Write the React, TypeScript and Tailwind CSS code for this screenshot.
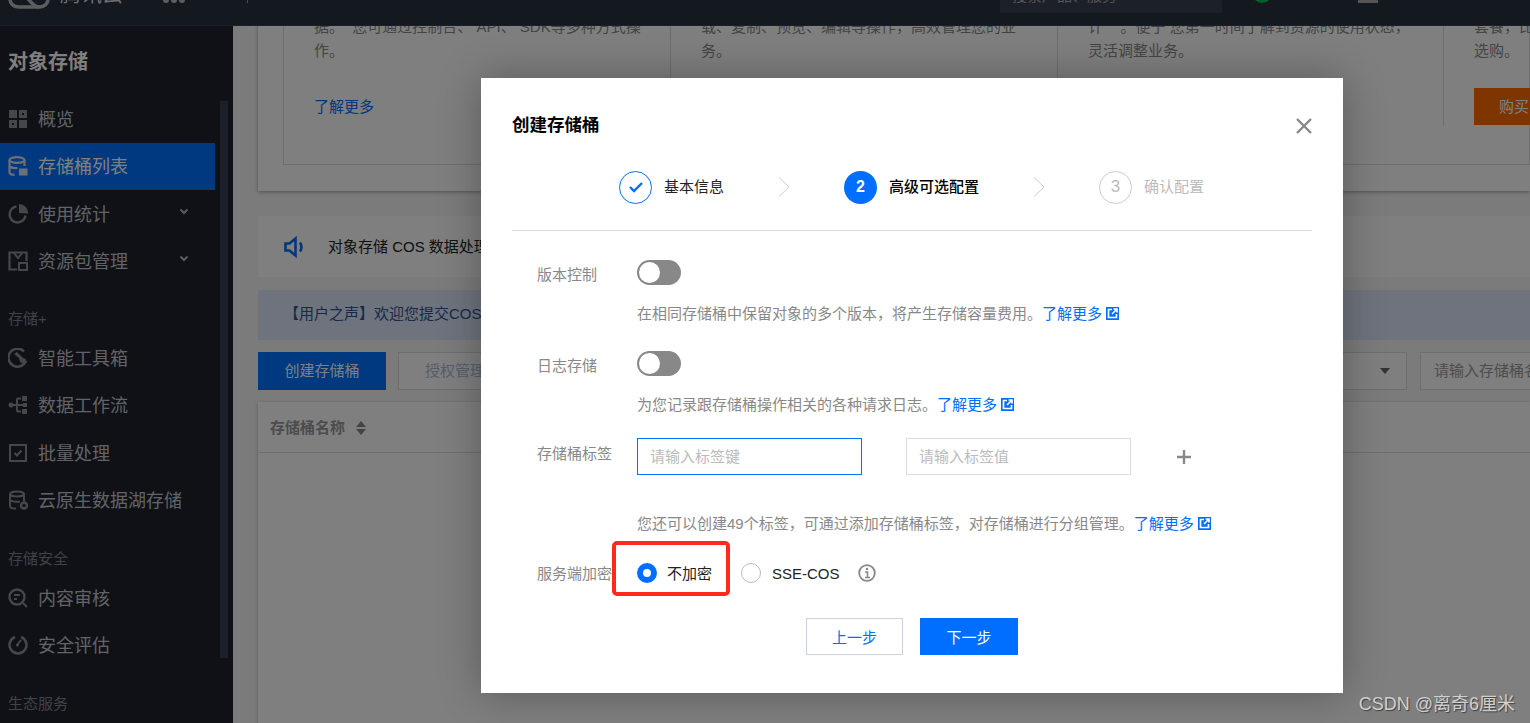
import React from 'react';

const FONT = 'font-["Liberation_Sans","Noto_Sans_CJK_SC",sans-serif]';

const Ic: React.FC<{ children: React.ReactNode }> = ({ children }) => (
  <svg width="20" height="20" viewBox="0 0 20 20" fill="none" stroke="currentColor" strokeWidth="2" className="shrink-0">
    {children}
  </svg>
);

const icons = {
  grid: (
    <Ic>
      <rect x="1" y="1" width="8" height="8" fill="currentColor" stroke="none" />
      <path fillRule="evenodd" d="M11 1h8v8h-8zM14 4v2h2V4z" fill="currentColor" stroke="none" />
      <path fillRule="evenodd" d="M1 11h8v8H1zM4 14v2h2v-2z" fill="currentColor" stroke="none" />
      <rect x="11" y="11" width="8" height="8" fill="currentColor" stroke="none" />
    </Ic>
  ),
  bucket: (
    <Ic>
      <ellipse cx="9" cy="4" rx="7.5" ry="2.8" strokeWidth="2.200" />
      <path d="M1.500 4v12c0 1.500 1.500 2.800 5 2.800M16.500 4v6M1.500 10.500c2 1.500 6 1.800 8 1.500" strokeWidth="2.200" />
      <rect x="11" y="12.500" width="8.500" height="7" fill="currentColor" stroke="none" />
    </Ic>
  ),
  pie: (
    <Ic>
      <path d="M8.500 2.500a8 8 0 1 0 9 9" strokeWidth="2.500" />
      <path d="M11 0a9 9 0 0 1 9 9.500l-9-.500z" fill="currentColor" stroke="none" />
    </Ic>
  ),
  box: (
    <Ic>
      <path d="M9 18.500H1.500v-17h17V10" strokeWidth="2.200" />
      <path d="M6 2l4 5 4-5" />
      <rect x="11" y="12" width="8" height="7" />
    </Ic>
  ),
  tool: (
    <Ic>
      <path d="M16 3.500a9 9 0 1 0 2 9" strokeWidth="2.500" />
      <path d="M6 6l3-2 6 6 3 1-2 5-4-2-1-4z" fill="currentColor" stroke="none" />
    </Ic>
  ),
  flow: (
    <Ic>
      <circle cx="3" cy="10" r="2.500" fill="currentColor" stroke="none" />
      <path d="M3 10h14M9 3.500v13M9 3.500h4M9 16.500h4" />
      <rect x="14" y="1" width="5" height="5" fill="currentColor" stroke="none" />
      <rect x="15" y="8" width="4" height="4" fill="currentColor" stroke="none" />
      <rect x="14" y="14" width="5" height="5" fill="currentColor" stroke="none" />
    </Ic>
  ),
  check: (
    <Ic>
      <rect x="2" y="2" width="16" height="16" />
      <path d="M6.500 10l2.500 2.500 4.500-5" />
    </Ic>
  ),
  db: (
    <Ic>
      <ellipse cx="9" cy="4" rx="7" ry="2.500" />
      <path d="M2 4v12c0 1.500 2 2.500 6 2.500M16 4v7M2 10c2 1.500 6 2 10 1.500" />
      <circle cx="16" cy="15.500" r="3" strokeWidth="2.500" />
    </Ic>
  ),
  audit: (
    <Ic>
      <circle cx="9" cy="9" r="7.500" strokeWidth="2.400" />
      <path d="M15 15l4 4M6 7h6M6 11h3" />
    </Ic>
  ),
  gauge: (
    <Ic>
      <path d="M7 2a8.500 8.500 0 1 0 6 0" strokeWidth="2.500" />
      <path d="M9 10l4-5" />
      <circle cx="9.500" cy="10" r="1.500" fill="currentColor" stroke="none" />
    </Ic>
  ),
};

const NavItem: React.FC<{ icon: React.ReactNode; label: string; active?: boolean; arrow?: boolean }> = ({ icon, label, active, arrow }) => (
  <div className={`h-[47.5px] w-[215px] flex items-center gap-[10px] pl-2 text-[18px] ${active ? 'bg-[#0072ff] text-white' : 'text-[#c2c6cc]'}`}>
    <span className={active ? 'text-[#dde]' : 'text-[#8a8e96]'}>{icon}</span>
    <span className="flex-1 whitespace-nowrap pt-[3px]">{label}</span>
    {arrow && (
      <svg width="10" height="8" viewBox="0 0 10 8" fill="none" stroke="#b4b8be" strokeWidth="2" className="mr-[26px] -mt-1">
        <path d="M1.500 1.500L5 5l3.500-3.500" />
      </svg>
    )}
  </div>
);

const GroupLabel: React.FC<{ text: string; h: string }> = ({ text, h }) => (
  <div className={`${h} pl-2 text-[15px] leading-5 text-[#7f858f]`}>{text}</div>
);

const Sidebar = () => (
  <aside className="relative w-[233px] shrink-0 bg-[#1e222e] overflow-hidden">
    <div className="h-[69px] pl-2 pt-[21px] text-[20px] leading-[30px] font-bold text-white">对象存储</div>
    <NavItem icon={icons.grid} label="概览" />
    <NavItem icon={icons.bucket} label="存储桶列表" active />
    <NavItem icon={icons.pie} label="使用统计" arrow />
    <NavItem icon={icons.box} label="资源包管理" arrow />
    <GroupLabel text="存储+" h="h-[49px] pt-[24px]" />
    <NavItem icon={icons.tool} label="智能工具箱" />
    <NavItem icon={icons.flow} label="数据工作流" />
    <NavItem icon={icons.check} label="批量处理" />
    <NavItem icon={icons.db} label="云原生数据湖存储" />
    <GroupLabel text="存储安全" h="h-[50px] pt-[25px]" />
    <NavItem icon={icons.audit} label="内容审核" />
    <NavItem icon={icons.gauge} label="安全评估" />
    <GroupLabel text="生态服务" h="h-[50px] pt-[25px]" />
    {/* scrollbar */}
    <div className="absolute left-[220px] top-[75px] w-2 h-[557px] bg-[#343f55]" />
  </aside>
);

const introCols = [
  { w: 'w-[387px]', lines: ['据。  您可通过控制台、 API、 SDK等多种方式操', '作。'], link: true },
  { w: 'w-[387px]', lines: ['载、复制、预览、编辑等操作，高效管理您的业', '务。'] },
  { w: 'w-[386px]', lines: ['计”\u00a0\u00a0\u00a0。便于 您第一时间了解到资源的使用状态，', '灵活调整业务。'] },
  { w: 'w-[120px]', lines: ['套餐，比', '选购。'], buy: true },
];

const Main = () => (
  <main className="flex-1 min-w-0 bg-[#f6f7f9] pl-[25px] overflow-hidden">
    {/* intro card */}
    <div className="-mt-[40px] h-[205px] bg-white shadow-[0_1px_4px_rgba(0,0,0,0.35)] pl-[25px]">
      <div className="h-[179px] flex border border-[#ddd]">
        {introCols.map((c, i) => (
          <div key={i} className={`${c.w} shrink-0 h-[139px] pl-[30px] pt-[28px] text-[15px] leading-6 text-[#888] whitespace-pre ${i < 3 ? 'border-r border-[#ddd]' : ''}`}>
            {c.lines.map(l => <div key={l}>{l}</div>)}
            {c.link && <div className="mt-[32px] text-[#006eff]">了解更多</div>}
            {c.buy && <div className="mt-[25px] w-[80px] h-[37px] pl-[25px] bg-[#ff6a00] text-white leading-[37px]">购买</div>}
          </div>
        ))}
      </div>
    </div>

    {/* notice */}
    <div className="mt-[25px] h-[61px] bg-white flex items-center pl-[26px] text-[15px] text-[#222]">
      <svg width="21" height="22" viewBox="0 0 21 22" fill="none" stroke="#006eff" strokeWidth="2.600" className="shrink-0">
        <path d="M1.500 7.500h4l6-5v17l-6-5h-4z" />
        <path d="M16 6.500c2 3 2 6 0 9" />
      </svg>
      <span className="ml-[23px] pt-[2px] whitespace-nowrap">对象存储 COS 数据处理功能升级</span>
    </div>

    {/* user voice */}
    <div className="mt-[13px] h-[50px] pb-[2px] bg-[#dde7fb] flex items-center pl-[26px] text-[15px] text-[#2f5590] whitespace-nowrap">
      【用户之声】欢迎您提交COS使用反馈
    </div>

    {/* toolbar */}
    <div className="mt-[12px] h-[38px] flex text-[15px] -mr-[30px]">
      <div className="w-[128px] flex items-center justify-center bg-[#0072ff] text-white">创建存储桶</div>
      <div className="ml-[12px] w-[120px] flex items-center pl-[26px] border border-[#ddd] bg-white text-[#a9bbd9]">授权管理</div>
      <div className="ml-auto w-[180px] relative border border-[#ddd] bg-white">
        <svg width="10" height="6" viewBox="0 0 10 6" className="absolute right-[16px] top-[15px]"><path d="M0 0h10L5 6z" fill="#666" /></svg>
      </div>
      <div className="ml-[13px] w-[140px] flex items-center pl-[13px] border border-[#ddd] bg-white text-[#999] whitespace-nowrap overflow-hidden">请输入存储桶名称</div>
    </div>

    {/* table */}
    <div className="mt-[12px] h-[400px] bg-white shadow-[0_1px_4px_rgba(0,0,0,0.25)]">
      <div className="h-[51px] pt-[2px] border-b border-[#ddd] flex items-center pl-3 text-[15px] font-bold text-[#999]">
        存储桶名称
        <svg width="10" height="14" viewBox="0 0 10 14" className="ml-[11px]"><path d="M5 0l5 6H0zM0 8h10l-5 6z" fill="#888" /></svg>
      </div>
    </div>
  </main>
);

const ExternalLink = () => (
  <svg width="13" height="13" viewBox="0 0 13 13" className="inline-block ml-1 align-[-1px]">
    <rect width="13" height="13" fill="#006eff" />
    <path d="M6 2.500H2.500v8h8V7M6 7l4.500-4.500M7.500 2h3.500v3.500" fill="none" stroke="#fff" strokeWidth="1.700" />
  </svg>
);

const Toggle = () => (
  <div className="w-[44px] h-[25px] rounded-full bg-[#888] p-[2px] shrink-0">
    <div className="w-[21px] h-[21px] rounded-full bg-white" />
  </div>
);

const Help: React.FC<{ text: string; mt: string }> = ({ text, mt }) => (
  <div className={`${mt} pl-[125px] text-[15px] leading-5 text-[#888] whitespace-nowrap`}>
    {text}<span className="text-[#006eff]">了解更多</span><ExternalLink />
  </div>
);

const Chevron = () => (
  <svg width="12" height="20" viewBox="0 0 12 20" fill="none" stroke="#ccc" className="shrink-0">
    <path d="M1 .5L11 10 1 19.500" />
  </svg>
);

const Label: React.FC<{ text: string; cls?: string }> = ({ text, cls }) => (
  <div className={`w-[100px] pl-[25px] shrink-0 text-[15px] text-[#888] whitespace-nowrap box-content -mr-[25px] ${cls ?? ''}`}>{text}</div>
);

const Modal = () => (
  <div className="absolute left-[481px] top-[78px] w-[862px] bg-white px-[31px] pb-[38px] shadow-[0_0_40px_rgba(0,0,0,0.3)]">
    {/* header */}
    <div className="h-[92px] flex items-center justify-between">
      <div className="pt-[2px] text-[17.5px] font-bold text-black">创建存储桶</div>
      <svg width="16" height="16" viewBox="0 0 16 16" fill="none" stroke="#888" strokeWidth="2.400" className="mt-1"><path d="M1 1l14 14M15 1L1 15" /></svg>
    </div>

    {/* steps */}
    <div className="h-[34px] flex items-center pl-[107px] text-[15px]">
      <div className="w-[33px] h-[33px] rounded-full border border-[#006eff] flex items-center justify-center shrink-0">
        <svg width="14" height="12" viewBox="0 0 14 12" fill="none" stroke="#006eff" strokeWidth="2.400"><path d="M1 6l4 4 8-8" /></svg>
      </div>
      <span className="ml-[12px] text-[#222]">基本信息</span>
      <div className="mx-[54px]"><Chevron /></div>
      <div className="w-[33px] h-[33px] rounded-full bg-[#006eff] text-[16px] text-white font-bold flex items-center justify-center shrink-0">2</div>
      <span className="ml-[12px] font-medium text-black">高级可选配置</span>
      <div className="mx-[54px]"><Chevron /></div>
      <div className="w-[33px] h-[33px] rounded-full border border-[#ccc] text-[17px] text-[#bbb] flex items-center justify-center shrink-0">3</div>
      <span className="ml-[12px] text-[#bbb]">确认配置</span>
    </div>

    <div className="mt-[26px] border-t border-[#ddd]" />

    {/* form */}
    <div className="mt-[29px] h-[25px] flex items-center">
      <Label text="版本控制" cls="mt-[6px]" />
      <div className="ml-[25px]"><Toggle /></div>
    </div>
    <Help text="在相同存储桶中保留对象的多个版本，将产生存储容量费用。" mt="mt-[19px]" />

    <div className="mt-[27px] h-[25px] flex items-center">
      <Label text="日志存储" cls="mt-[6px]" />
      <div className="ml-[25px]"><Toggle /></div>
    </div>
    <Help text="为您记录跟存储桶操作相关的各种请求日志。" mt="mt-[19px]" />

    <div className="mt-[23px] h-[37px] flex items-center">
      <Label text="存储桶标签" cls="-mt-[5px]" />
      <div className="ml-[25px] w-[225px] h-[37px] border border-[#0070ff] pl-[12px] pt-[2px] flex items-center text-[15px] text-[#bbb]">请输入标签键</div>
      <div className="ml-[44px] w-[225px] h-[37px] border border-[#ddd] pl-[12px] pt-[2px] flex items-center text-[15px] text-[#bbb]">请输入标签值</div>
      <svg width="14" height="14" viewBox="0 0 14 14" stroke="#888" strokeWidth="2.400" className="ml-[46px]"><path d="M7 0v14M0 7h14" /></svg>
    </div>
    <Help text="您还可以创建49个标签，可通过添加存储桶标签，对存储桶进行分组管理。" mt="mt-[39px]" />

    <div className="mt-[29px] h-[20px] flex items-center text-[15px] text-[#222]">
      <Label text="服务端加密" cls="pt-[2px]" />
      <div className="ml-[25px] w-[20px] h-[20px] rounded-full border-[6px] border-[#006eff] shrink-0" />
      <span className="ml-[10px] pt-[2px] whitespace-nowrap">不加密</span>
      <div className="ml-[29px] w-[20px] h-[20px] rounded-full border border-[#bbb] shrink-0" />
      <span className="ml-[11px] pt-[2px] whitespace-nowrap">SSE-COS</span>
      <svg width="18" height="18" viewBox="0 0 18 18" fill="none" stroke="#888" className="ml-[18px]">
        <circle cx="9" cy="9" r="7.800" strokeWidth="1.800" />
        <path d="M7 8h2.500v5M7 13.500h5" strokeWidth="1.600" />
        <circle cx="9" cy="5" r="1.200" fill="#888" stroke="none" />
      </svg>
    </div>

    {/* footer */}
    <div className="mt-[35px] flex justify-center gap-[17px] text-[15px]">
      <div className="w-[97px] h-[37px] pt-1 border border-[#c9d4e4] text-[#006eff] flex items-center justify-center">上一步</div>
      <div className="w-[98px] h-[37px] pt-1 bg-[#006eff] text-white flex items-center justify-center">下一步</div>
    </div>

    {/* annotation drawn on the screenshot */}
    <div className="absolute left-[131px] top-[463px] w-[118px] h-[55px] border-[4px] border-[#ff2a1a] rounded-[5px]" />
  </div>
);

export default function App() {
  return (
    <div className={`relative w-[1530px] h-[723px] overflow-hidden flex flex-col ${FONT}`}>
      {/* top bar, scrolled partly out of view */}
      <header className="relative z-10 h-[26px] shrink-0 bg-[#28303f] border-b border-[#363f50] overflow-hidden">
        <div className="-mt-[26px] h-[39px] flex items-center text-[#ddd]">
          <svg width="42" height="30" viewBox="0 0 42 30" fill="none" stroke="#bbb" strokeWidth="3.500" className="ml-2 shrink-0">
            <path d="M11 28C5 28 2 24 2 20s3-8 9-8c6 0 12 16 20 16 6 0 9-4 9-8s-3-8-9-8c-4 0-7 2-10 6" />
            <path d="M11 28h20" />
          </svg>
          <span className="ml-[10px] text-[21px] whitespace-nowrap">腾讯云</span>
          <span className="ml-[40px] w-[22px] border-b-[6px] border-dotted border-[#bbb] self-end mb-[10px]" />
          <span className="ml-[62px] w-px h-[29px] mb-[10px] bg-[#999] self-end" />
          <div className="ml-auto w-[222px] h-[39px] bg-[#384050] self-start flex items-center pl-3 pt-[6px] text-[15px] text-[#aaa] whitespace-nowrap">
            搜索产品、服务
          </div>
          <span className="ml-[30px] w-[20px] h-[29px] mb-[10px] rounded-full border-[3px] border-[#00c050] self-end" />
          <span className="ml-[86px] mr-[152px] w-[20px] h-[29px] mb-[10px] bg-[#aaa] self-end" />
        </div>
      </header>

      <div className="flex-1 min-h-0 flex">
        <Sidebar />
        <Main />
      </div>

      {/* dimmed backdrop */}
      <div className="absolute inset-0 z-20 bg-black/50" />

      <div className="absolute inset-0 z-30">
        <Modal />
        <div className="absolute right-[15px] bottom-[7px] text-[18px] leading-[24px] text-[#d0d0d0] [text-shadow:1px_1px_1px_rgba(0,0,0,0.5)] whitespace-nowrap">
          CSDN @离奇6厘米
        </div>
      </div>
    </div>
  );
}
